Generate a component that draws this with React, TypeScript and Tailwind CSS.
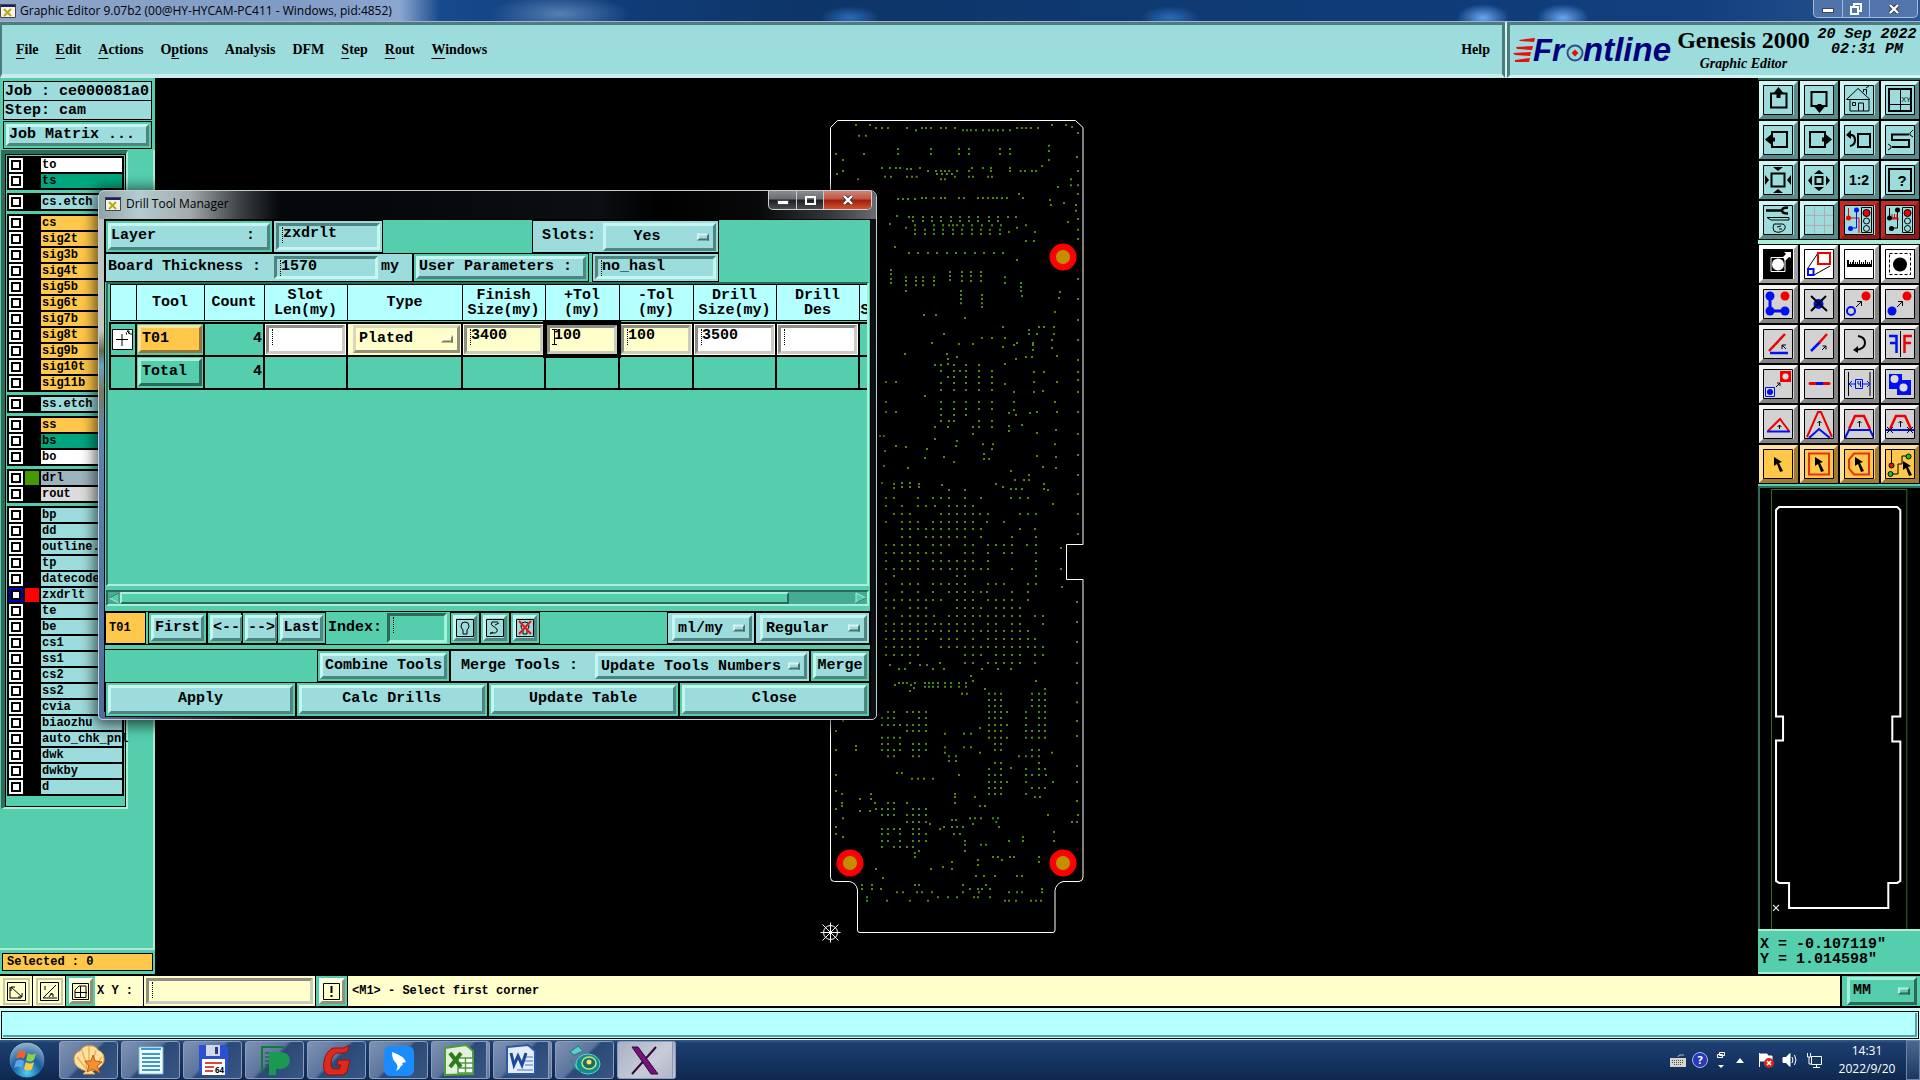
import type { ReactNode } from "react";

const mono = "font-['Liberation_Mono',monospace]";
const serif = "font-['Liberation_Serif',serif]";
const ui = "font-['Open_Sans','Noto_Sans',sans-serif]";

const raised = "border-[3px] border-t-[#c6f6f2] border-l-[#c6f6f2] border-r-[#4e8482] border-b-[#4e8482] bg-[#9cdcdc]";
const raisedGreen = "border-[3px] border-t-[#a9efd8] border-l-[#a9efd8] border-r-[#2b6a59] border-b-[#2b6a59]";
const raisedYellow = "border-[3px] border-t-[#d8d8b8] border-l-[#d8d8b8] border-r-[#90907c] border-b-[#90907c] bg-[#ffffcc]";
const sunken = "border-[3px] border-t-[#4e8482] border-l-[#4e8482] border-r-[#c6f6f2] border-b-[#c6f6f2]";
const sunkenGrey = "border-[3px] border-t-[#8e8e86] border-l-[#8e8e86] border-r-[#cbcbc0] border-b-[#cbcbc0]";

const MENUS: [string, string, string][] = [
  ["", "F", "ile"],
  ["", "E", "dit"],
  ["", "A", "ctions"],
  ["O", "p", "tions"],
  ["Analysis", "", ""],
  ["DFM", "", ""],
  ["", "S", "tep"],
  ["", "R", "out"],
  ["", "W", "indows"],
];

const CYAN = "bg-[#9cdcdc]";
const ORANGE = "bg-[#ffc84a]";

type Layer = { name: string; bg: string; swatch?: string; active?: boolean };

const LAYERS: Layer[][] = [
  [
    { name: "to", bg: "bg-white" },
    { name: "ts", bg: "bg-[#00a77e]" },
  ],
  [{ name: "cs.etch", bg: CYAN }],
  ["cs", "sig2t", "sig3b", "sig4t", "sig5b", "sig6t", "sig7b", "sig8t", "sig9b", "sig10t", "sig11b"].map((name) => ({ name, bg: ORANGE })),
  [{ name: "ss.etch", bg: CYAN }],
  [
    { name: "ss", bg: ORANGE },
    { name: "bs", bg: "bg-[#00a77e]" },
    { name: "bo", bg: "bg-white" },
  ],
  [
    { name: "drl", bg: "bg-[#9cb4be]", swatch: "bg-[#449800]" },
    { name: "rout", bg: "bg-[#dcdcdc]" },
  ],
  [
    ...["bp", "dd", "outline.", "tp", "datecode"].map((name) => ({ name, bg: CYAN })),
    { name: "zxdrlt", bg: CYAN, swatch: "bg-[#ff0000]", active: true },
    ...["te", "be", "cs1", "ss1", "cs2", "ss2", "cvia", "biaozhu", "auto_chk_pnl", "dwk", "dwkby", "d"].map((name) => ({ name, bg: CYAN })),
  ],
];

// drill hits, one row per entry: y followed by every x, three units per pixel
const HITS_TOP: number[][] = [
  [45, 108, 150, 696, 738], [51, 756], [54, 168, 186, 204, 261, 306, 318, 333, 363, 378, 405, 591, 606, 618, 633, 654],
  [61, 288, 429, 441, 453, 468, 489, 507, 519, 534, 549, 570], [69, 774], [77, 117, 138], [107, 687],
  [117, 234, 333, 417, 447, 540, 570], [123, 687], [132, 48, 132, 234, 333, 417, 447, 540, 570], [141, 771], [150, 69, 687],
  [168, 666], [174, 186, 210, 228, 240, 300, 456, 489, 513, 570], [177, 261, 273],
  [183, 69, 324, 348, 363, 375, 387, 411, 447, 513, 570, 602, 615, 636, 648, 774], [192, 51, 351, 366, 381, 396],
  [200, 195, 213, 261, 276, 290, 405, 447, 459, 504, 516], [208, 114, 363, 375, 753], [226, 753, 774], [231, 714], [252, 597, 774],
  [264, 306, 318, 342, 363, 375, 417, 432, 474, 489, 504, 519, 531, 546, 561, 609], [267, 234, 249, 264, 285], [270, 690], [279, 732],
  [285, 693, 768], [302, 768], [318, 231], [321, 267, 279, 309, 336, 363, 393, 420, 447, 474, 507, 534, 564, 588], [327, 774],
  [333, 279, 309, 336, 363, 393, 420, 447, 474, 507, 534], [336, 744], [342, 210],
  [346, 285, 342, 369, 387, 399, 411, 429, 456, 486, 516, 543, 618], [353, 258, 591],
  [359, 285, 315, 342, 369, 399, 426, 456, 483, 510, 540, 774], [366, 567, 645],
  [372, 285, 315, 342, 369, 399, 426, 456, 483, 510, 540], [387, 774], [393, 618, 642], [411, 225],
  [429, 267, 294, 324, 351, 381, 408, 435, 465, 492, 522, 549], [450, 591], [480, 213], [486, 390, 426, 453, 483], [492, 213],
  [498, 390, 426, 453, 483], [502, 258, 288, 309, 342, 555], [507, 213, 774], [510, 390], [513, 258, 288, 309, 342, 426, 453, 483],
  [519, 213, 555, 603], [526, 258, 288, 309, 342], [531, 603], [543, 258, 423, 603], [546, 720], [555, 423, 486], [558, 606],
  [564, 717], [567, 423, 486, 774], [580, 423, 486], [591, 486], [606, 705], [615, 312, 348], [624, 435], [630, 774],
  [651, 549, 657, 672, 702], [660, 627], [672, 372, 627, 651, 702], [684, 486, 516, 555], [690, 696, 774], [699, 336, 591, 639],
  [702, 417, 459], [705, 582, 639], [711, 549], [714, 696], [720, 639], [732, 255, 381], [738, 711], [741, 411, 618, 636],
  [747, 384, 588], [750, 774], [762, 384, 555], [765, 345, 363, 402, 438, 477], [783, 363, 402, 420, 438, 477, 516],
  [786, 642, 672, 774], [801, 384, 402, 438, 477, 516], [810, 774], [816, 198, 228, 642, 711], [819, 363, 402, 438, 477, 516],
  [822, 555], [840, 363, 402, 438, 477, 516], [843, 669], [846, 582, 642, 774], [858, 315],
  [876, 198, 363, 402, 438, 477, 516, 582, 705], [897, 363, 402, 438, 477, 516], [900, 582], [906, 198, 228, 651, 711, 774],
  [909, 567, 630], [915, 363, 402, 438, 588], [933, 363, 387, 402, 477, 516], [945, 606], [948, 567], [951, 345, 384, 459, 477, 516],
  [960, 708], [963, 567], [969, 651], [972, 459, 774], [978, 180, 192], [987, 345], [993, 411], [1003, 489, 519, 705],
  [1008, 228, 408], [1011, 258], [1017, 321, 516], [1023, 195], [1032, 492], [1035, 774], [1038, 651], [1041, 372, 708], [1044, 315],
  [1047, 492, 507], [1056, 402], [1068, 192], [1071, 669], [1074, 264, 708], [1083, 573], [1095, 627, 774], [1110, 585, 612, 627],
  [1119, 186, 246, 270], [1122, 222, 297, 528, 672], [1125, 366], [1131, 246, 270, 297, 549], [1134, 222], [1137, 573, 588, 606, 672],
  [1140, 387, 435, 684], [1152, 774], [1164, 198, 222, 294, 339, 363, 387, 435, 483, 573, 600, 624], [1182, 699],
  [1188, 198, 246, 294, 318, 345, 387, 411, 435, 459],
];

const HITS_BOTTOM: number[][] = [
  [12, 222, 246, 270, 363, 387, 411, 435, 459, 480, 504, 600, 624, 648, 774], [36, 198, 246, 270, 294, 339, 363, 387, 411, 435, 459, 501, 552],
  [57, 246, 270, 294, 318, 339, 363, 387, 411, 435, 459, 483, 600, 645], [72, 774],
  [81, 246, 270, 318, 339, 363, 387, 411, 435, 483, 576, 648],
  [105, 198, 222, 246, 270, 294, 339, 363, 387, 435, 459, 504, 528, 552, 576, 621, 648], [114, 723],
  [129, 198, 222, 246, 270, 294, 318, 339, 363, 435, 459, 504, 552, 576, 648],
  [153, 198, 246, 270, 294, 339, 363, 387, 411, 435, 459, 504, 648],
  [177, 198, 222, 246, 270, 294, 339, 363, 390, 411, 435, 459, 483, 504, 576, 648, 723], [198, 222, 411, 435, 648],
  [222, 198, 246, 270, 294, 339, 363, 387, 411, 435, 504, 528, 552, 624, 648], [231, 726],
  [246, 198, 246, 294, 339, 387, 411, 435, 459, 483, 501, 576, 624],
  [270, 198, 222, 246, 270, 294, 318, 339, 363, 411, 435, 459, 504, 528, 552, 576, 624], [276, 771],
  [294, 198, 222, 270, 294, 318, 411, 435, 459, 483, 528, 552, 576, 600],
  [318, 198, 246, 270, 294, 318, 342, 387, 411, 435, 459, 480, 504, 528, 552, 576, 600, 645, 669], [336, 771],
  [342, 198, 222, 246, 270, 294, 318, 345, 363, 387, 411, 435, 459, 504, 528, 576, 600, 669],
  [363, 198, 222, 246, 270, 294, 318, 339, 363, 387, 411, 435, 459, 483, 504, 528, 552, 576, 600, 624],
  [387, 198, 222, 246, 270, 294, 318, 363, 387, 411, 459, 504, 528, 552, 576, 600, 624, 645], [396, 771],
  [411, 198, 222, 246, 270, 294, 363, 387, 411, 435, 459, 483, 504, 528, 552, 576, 600, 624, 645, 669],
  [435, 198, 222, 246, 270, 294, 435, 459, 483, 528, 552, 576, 600, 645, 669],
  [459, 270, 360, 435, 459, 504, 528, 552, 576, 600, 645, 771], [465, 210, 300, 321], [477, 237, 255, 339, 372, 486, 534, 573],
  [498, 453], [513, 459, 648], [519, 237, 249, 261, 285, 315, 327, 339, 354, 375, 393, 417, 438, 771],
  [525, 225, 273], [530, 315, 327, 339, 354, 375, 393, 417, 438], [534, 282], [537, 495, 675], [543, 270],
  [551, 426, 441, 507, 525, 543, 636, 657, 675], [570, 507, 525, 543, 636, 657, 675], [577, 771], [588, 507, 525, 543, 636, 657, 675],
  [606, 204, 222, 261, 279, 297, 318, 507, 525, 543, 561, 618, 657, 675], [624, 186, 204, 222, 297, 318, 507, 525, 543, 618, 657, 675],
  [633, 69, 771], [645, 186, 204, 222, 240, 261, 279, 297, 318, 507, 525, 543, 561, 618, 657, 675], [654, 480],
  [663, 48, 261, 279, 297, 318, 507, 525, 543, 618, 636, 657, 675], [671, 375, 432, 453], [678, 771],
  [683, 186, 204, 222, 240, 507, 525, 543, 561, 618, 636, 657, 675], [702, 186, 204, 240, 279, 297, 318, 525, 543], [708, 108],
  [712, 375, 432, 453], [720, 48, 108, 186, 204, 222, 240, 279, 297, 318, 525, 543, 636, 657], [728, 375, 480, 696],
  [739, 204, 222, 279, 297, 387, 408, 597, 618, 636, 657], [753, 387, 408], [759, 525, 543, 657], [768, 771], [774, 573],
  [777, 507, 543, 618, 657, 675], [789, 231, 246], [795, 48, 417, 507, 525, 543, 618, 636, 657, 678], [806, 276, 294, 312, 339],
  [816, 507, 525, 543, 561, 618, 699, 771], [834, 507, 525, 543, 636, 657, 675], [843, 48], [852, 66, 153, 405, 507, 525, 543, 618],
  [861, 405, 465, 645, 660], [867, 120, 153], [873, 771], [879, 66, 165, 204, 222, 261, 405], [888, 66, 480, 495],
  [897, 48, 168, 186, 204, 222, 279, 297, 318], [903, 120, 150], [915, 186, 204, 222, 261, 279, 297, 318, 684, 774],
  [925, 69, 450, 465, 483, 519, 534], [930, 396, 408], [936, 261, 279, 297, 318, 529, 756, 771], [942, 330, 459],
  [951, 48, 372, 396, 411, 429, 537], [957, 186, 204, 222, 240, 279, 297, 360], [966, 702], [972, 48, 186, 204, 240, 279, 297, 318, 402, 420],
  [981, 69, 609], [993, 186, 204, 240, 279, 297, 318, 435, 567, 609, 702], [1004, 435, 483, 498], [1011, 186, 222, 240, 261, 279],
  [1023, 297, 435], [1029, 285], [1041, 285, 519, 534, 570, 582, 657], [1050, 474, 546], [1056, 396, 657], [1065, 474], [1071, 369],
  [1077, 168, 333, 396], [1098, 468, 492, 525, 591, 606], [1104, 189], [1125, 126, 156, 285, 297, 429, 498],
  [1137, 126, 156, 183, 450, 474, 486, 510, 666], [1147, 231, 249, 291, 306, 336, 429, 477, 567, 591, 606, 666],
  [1162, 141, 354, 384, 411, 462, 474, 510], [1172, 141, 201, 270, 324, 555, 567, 588, 633, 648, 663],
];

const hitsPath = (rows: number[][]) => rows.map(([y, ...xs]) => xs.map((x) => `M${x - 3} ${y}h6`).join("")).join("");

function Caret({ solid }: { solid?: boolean }) {
  return (
    <span
      className={
        solid
          ? "pointer-events-none absolute top-px left-[2px] h-4 w-[5px] border-y border-black bg-[linear-gradient(black,black)] bg-[length:1px_100%] bg-center bg-no-repeat"
          : "pointer-events-none absolute top-px left-[3px] h-4 w-px border-l border-dotted border-black"
      }
    />
  );
}

function Entry({ label, value = "", className, solid }: { label: string; value?: string; className: string; solid?: boolean }) {
  return (
    <div className={`relative flex items-start ${className}`}>
      <Caret solid={solid} />
      <input aria-label={label} defaultValue={value} className="h-[17px] w-full min-w-0 bg-transparent pl-1 font-bold outline-none" />
    </div>
  );
}

function Option({ label, value, className, box = raised, align = "text-left" }: { label: string; value: string; className: string; box?: string; align?: string }) {
  return (
    <div className={`relative flex ${box} ${className}`}>
      <select aria-label={label} className={`w-full appearance-none bg-transparent px-[3px] font-bold outline-none ${align}`}>
        <option>{value}</option>
      </select>
      <span className="pointer-events-none absolute top-1/2 right-1 h-[7px] w-3 -translate-y-1/2 border-2 border-t-white/60 border-r-black/50 border-b-black/50 border-l-white/60" />
    </div>
  );
}

function Cell({ children, className = "", bg = "bg-[#55ceae]" }: { children?: ReactNode; className?: string; bg?: string }) {
  return <div className={`flex border border-black p-[2px] ${bg} ${className}`}>{children}</div>;
}

function PushButton({ children, align = "justify-center" }: { children: ReactNode; align?: string }) {
  return (
    <button type="button" className={`flex flex-1 items-center font-bold whitespace-pre ${align} ${raised}`}>
      {children}
    </button>
  );
}

function AppGlyph() {
  return (
    <svg viewBox="0 0 16 14" className="h-[14px] w-4 shrink-0">
      <path d="M0 0h16v14H0z" fill="#f4f4e8" />
      <path d="M0 0h16v3H0z" fill="#1c1c78" />
      <path d="M.5.5h15v13H.5z" fill="none" stroke="#444" />
      <path d="M4 5l7 7M11 5l-7 7" stroke="#b8a818" strokeWidth="2" />
    </svg>
  );
}

function CloseGlyph() {
  return (
    <svg viewBox="0 0 12 10" className="h-[10px] w-3">
      <path d="M2 1l8 8M10 1L2 9" stroke="#334" strokeWidth="4" />
      <path d="M2 1l8 8M10 1L2 9" stroke="#fff" strokeWidth="2.4" />
    </svg>
  );
}

function TitleBar() {
  return (
    <div
      className={`flex h-[22px] items-start border-b border-[#9fb4cc] bg-[radial-gradient(ellipse_26px_14px_at_1483px_18px,#6aa6f4,transparent),radial-gradient(ellipse_26px_14px_at_1563px_18px,#6aa6f4,transparent),radial-gradient(ellipse_30px_12px_at_850px_18px,#2c6cb8,transparent),radial-gradient(ellipse_30px_12px_at_1170px_18px,#2c6cb8,transparent),radial-gradient(ellipse_70px_20px_at_560px_14px,#5580b4,transparent),linear-gradient(90deg,#8fa6c8_0,#7f9cc6_280px,#8ba6d0_400px,#174a8c_440px,#103c78_620px,#0d3568_800px,#0f3c78_1400px,#12407e_1700px,#2a5894_100%)] ${ui}`}
    >
      <div className="flex flex-1 items-center gap-1 pt-[3px]">
        <AppGlyph />
        <span className="text-[12px] leading-4 text-black">Graphic Editor 9.07b2 (00@HY-HYCAM-PC411 - Windows, pid:4852)</span>
      </div>
      <div className="mr-[2px] flex h-[18px] w-[105px] divide-x divide-[#a8bcd8] rounded-b-[5px] border border-t-0 border-[#a8bcd8] bg-[#6485b8]/70">
        <button type="button" aria-label="Minimize" className="flex w-[29px] items-center justify-center">
          <span className="mt-1 h-[5px] w-3 border border-[#445] bg-white" />
        </button>
        <button type="button" aria-label="Restore" className="flex w-[27px] items-center justify-center">
          <svg viewBox="0 0 14 12" className="h-3 w-[14px]" fill="none" stroke="#fff" strokeWidth="2">
            <path d="M5 3V1h7v7h-2M2 4h7v7H2z" />
          </svg>
        </button>
        <button type="button" aria-label="Close window" className="flex flex-1 items-center justify-center">
          <CloseGlyph />
        </button>
      </div>
    </div>
  );
}

function Logo() {
  return (
    <svg viewBox="0 0 160 38" className="h-[38px] w-[160px] shrink-0 overflow-visible">
      <path d="M6 8l15-2h1l-1 4-14-1zM3 15l17-1-1 4-15-1zM0 21l18-1-1 4-15-1zM2 28l15-2-1 4H2z" fill="#e8100c" />
      <g className="font-['Liberation_Sans',sans-serif] font-bold italic" fill="#00007c">
        <text x="20" y="29" fontSize="31">
          Fr
        </text>
        <text x="70" y="29" fontSize="33">
          ntline
        </text>
      </g>
      <circle cx="62" cy="21" r="7.500" fill="none" stroke="#30508c" strokeWidth="2" />
      <path d="M62 17.500l3.500 3.500-3.500 3.500-3.500-3.500z" fill="#e8100c" />
    </svg>
  );
}

function Header() {
  return (
    <header className="flex h-14 bg-[#d4f4f2]">
      <nav className={`flex flex-1 items-center border-t-[3px] border-r-[3px] border-b-[4px] border-l-2 border-t-[#4e7c7c] border-r-[#4e7c7c] border-b-[#c8ecea] border-l-[#4e7c7c] bg-[#9cdcdc] pr-3 pl-[14px] text-[14px] font-bold ${serif}`}>
        <div className="flex flex-1 gap-[17px]">
          {MENUS.map(([before, key, after]) => (
            <button type="button" key={before + key + after}>
              {before}
              <span className="underline underline-offset-4">{key}</span>
              {after}
            </button>
          ))}
        </div>
        <button type="button">Help</button>
      </nav>
      <div className="ml-[2px] flex w-[413px] items-start border-t-[3px] border-b-[3px] border-l-[3px] border-t-[#4e7c7c] border-b-[#d4f4f2] border-l-[#4e7c7c] bg-[#9cdcdc] pt-[2px] pl-[3px]">
        <div className="pt-[5px]">
          <Logo />
        </div>
        <div className={`flex w-[141px] flex-col items-center font-bold whitespace-nowrap ${serif}`}>
          <span className="text-[24px] leading-[26px]">Genesis 2000</span>
          <span className="text-[14px] leading-[22px] italic">Graphic Editor</span>
        </div>
        <div className={`flex flex-1 flex-col items-center text-[15px] leading-[15px] font-bold italic ${mono}`}>
          <span>20 Sep 2022</span>
          <span>02:31 PM</span>
        </div>
      </div>
    </header>
  );
}

function LayerRow({ layer }: { layer: Layer }) {
  return (
    <li className="flex h-4 items-center gap-[2px] pl-px">
      <input
        type="checkbox"
        aria-label={layer.name}
        className={`size-[14px] shrink-0 appearance-none border-[3px] bg-white outline-2 -outline-offset-4 outline-black ${layer.active ? "border-[#0000b8]" : "border-white"}`}
      />
      <span className={`size-[14px] shrink-0 ${layer.swatch ?? "bg-black"}`} />
      <span className={`h-[14px] min-w-0 flex-1 pl-px text-[12px] leading-[14px] font-bold ${layer.bg}`}>{layer.name}</span>
    </li>
  );
}

function LayerPanel() {
  return (
    <aside className={`flex w-[155px] shrink-0 flex-col bg-[#55ceae] ${mono}`}>
      <div className="flex flex-col px-[3px] pt-[3px] text-[15px] font-bold">
        <div className="h-5 border border-black bg-[#9cdcdc] pl-px leading-[19px] whitespace-pre">Job : ce000081a0</div>
        <div className="h-[19px] border border-t-0 border-black bg-[#9cdcdc] pl-px leading-[19px]">Step: cam</div>
        <Cell className="mt-px h-7 w-full">
          <PushButton align="justify-start">Job Matrix ...</PushButton>
        </Cell>
      </div>
      <div className="mt-px flex flex-1 flex-col items-start border-r-2 border-b-2 border-[#a9efd8] pl-px">
        <div className="border-t-4 border-r-2 border-b-2 border-l-4 border-t-[#2e6b5b] border-r-[#a9efd8] border-b-[#a9efd8] border-l-[#2e6b5b]">
          <div className="border border-black p-[1px] pb-[10px]">
            <div className="flex flex-col gap-[3px]">
              {LAYERS.map((group) => (
                <ul key={group[0].name} className="w-[117px] bg-black p-px pr-[2px]">
                  {group.map((layer) => (
                    <LayerRow key={layer.name} layer={layer} />
                  ))}
                </ul>
              ))}
            </div>
          </div>
        </div>
      </div>
      <div className="px-[2px] py-[3px]">
        <div className="h-[18px] border border-black bg-[#ffc84a] pl-1 text-[12px] leading-4 font-bold">Selected : 0</div>
      </div>
    </aside>
  );
}

function BoardCanvas() {
  return (
    <section className="relative flex-1 overflow-hidden bg-black">
      <svg viewBox="155 78 1603 896" className="absolute inset-0 size-full" preserveAspectRatio="xMidYMid slice">
        <path
          d="M830.500 127.500l7-7h238l7.500 7V544.500h-16.500v35h16.500V877q0 4-4 4.500h-16q-7 2-8 9V930q0 2.500-2 2.500H860q-2.500 0-2.500-2.500v-40q-1-7-8-8.500h-15q-4 0-4-4z"
          fill="none"
          stroke="#fff"
        />
        <g stroke="#4d8a12" strokeWidth="6">
          <path transform="translate(820 110) scale(.33333)" d={hitsPath(HITS_TOP)} />
          <path transform="translate(820 510) scale(.33333)" d={hitsPath(HITS_BOTTOM)} />
        </g>
        {[
          [1063, 257],
          [850, 863],
          [1063, 863],
        ].map(([x, y]) => (
          <g key={`${x}-${y}`}>
            <circle cx={x} cy={y} r="13.500" fill="#f00" />
            <circle cx={x} cy={y} r="7" fill="#c09000" />
          </g>
        ))}
        <g fill="none" stroke="#fff" transform="translate(830.500 932.500)">
          <circle r="7" />
          <path d="M-10 0h20M0-10v20M-8-8l16 16M8-8L-8 8" />
        </g>
      </svg>
    </section>
  );
}

type Tool = { name: string; art: ReactNode };

const K = "#000";
const R = "#f00000";
const B = "#0010f0";

const VIEW_TOOLS: Tool[] = [
  {
    name: "Pan up",
    art: (
      <>
        <path d="M8 8.500h15.500v14H8z" fill="none" stroke={K} strokeWidth="2" />
        <path d="M15.500 2l-5 6h3v5h4V8h3z" />
      </>
    ),
  },
  {
    name: "Pan down",
    art: (
      <>
        <path d="M7.500 7h15v14h-15z" fill="none" stroke={K} strokeWidth="2" />
        <path d="M15.500 28l-5-6h3v-3h4v3h3z" />
      </>
    ),
  },
  {
    name: "Home",
    art: (
      <path d="M2.500 14.500L14 3.500l12 11H2.500M6 14.500V26h19V14.500M14.500 26v-8h5v8M8.500 17.500h3v3h-3zM19.500 7V4.500h3v5M22 3l3-2" fill="none" stroke={K} />
    ),
  },
  {
    name: "Set view by coordinates",
    art: (
      <>
        <path d="M4 4h22v22H4z" fill="none" stroke={K} strokeWidth="2" />
        <path d="M15.500 4v22M4 19.500h22" fill="none" stroke={K} />
        <text x="16.500" y="17" fontSize="7" className="font-['Liberation_Sans',sans-serif]">
          XY
        </text>
      </>
    ),
  },
  {
    name: "Pan left",
    art: (
      <>
        <path d="M9 7h15v15H9z" fill="none" stroke={K} strokeWidth="2" />
        <path d="M2 14.500l6-5v3h4v4H8v3z" />
      </>
    ),
  },
  {
    name: "Pan right",
    art: (
      <>
        <path d="M6 7h15v15H6z" fill="none" stroke={K} strokeWidth="2" />
        <path d="M28 14.500l-6-5v3h-4v4h4v3z" />
      </>
    ),
  },
  {
    name: "Previous view",
    art: (
      <>
        <path d="M14 9h12v13H14z" fill="none" stroke={K} strokeWidth="2" />
        <path d="M5 10h3q3 1 3 5 0 5-5 6" fill="none" stroke={K} strokeWidth="2" />
        <path d="M2 10l5-5v9z" />
      </>
    ),
  },
  {
    name: "Serpentine",
    art: (
      <>
        <path d="M24 9.500H7v5.500h17v7H7" fill="none" stroke={K} strokeWidth="2" />
        <path d="M28 5l-3 3v2l3 2M3 19l3 2v2l-3 2" fill="none" stroke={K} />
      </>
    ),
  },
  {
    name: "Zoom out",
    art: (
      <>
        <path d="M8.500 8.500h13v13h-13z" fill="none" stroke={K} strokeWidth="2" />
        <path d="M10 2h10l-5 4zM10 28h10l-5-4zM2 10v10l4-5zM28 10v10l-4-5z" />
      </>
    ),
  },
  {
    name: "Zoom in",
    art: (
      <>
        <path d="M11.500 12h7v7h-7z" fill="none" stroke={K} strokeWidth="2" />
        <path d="M10 9h10l-5-4zM10 22h10l-5 4zM8 10.500v10l-4-5zM22 10.500v10l4-5z" />
      </>
    ),
  },
  {
    name: "Scale 1:2",
    art: (
      <text x="15" y="20" textAnchor="middle" fontSize="14" fontWeight="bold" className="font-['Liberation_Sans',sans-serif]">
        1:2
      </text>
    ),
  },
  {
    name: "Query",
    art: (
      <>
        <path d="M4 4h22v22H4z" fill="none" stroke={K} strokeWidth="2" />
        <text x="17" y="21" textAnchor="middle" fontSize="15" fontWeight="bold" className="font-['Liberation_Sans',sans-serif]">
          ?
        </text>
      </>
    ),
  },
  {
    name: "Settings",
    art: (
      <>
        <path d="M3 5.500h16M25 2.500q-6 0-6 3t6 3" fill="none" stroke={K} strokeWidth="2.500" />
        <path d="M4 12.500h22v2.500H8zM11 19h9q4 2 1 6-5 4-10 1-2-3 0-7M14 22l4-1M16 24h3" fill="none" stroke={K} />
      </>
    ),
  },
  { name: "Grid", art: <path d="M10.500 1v28M20.500 1v28M1 10.500h28M1 20.500h28" fill="none" stroke="#b8a8b4" /> },
  {
    name: "Online DRC",
    art: (
      <>
        <path d="M4.500 3v10H15v15" fill="none" stroke={R} />
        <path d="M12.500 6v17H6" fill="none" stroke={B} />
        <circle cx="4.500" cy="13" r="2.500" fill={R} />
        <circle cx="12.500" cy="5" r="2.500" fill={B} />
        <circle cx="6.500" cy="23.500" r="2.500" fill={B} />
        <path d="M17.500 2.500h10v25h-10z" fill="none" stroke={K} />
        <circle cx="22.500" cy="8" r="3.500" fill={R} stroke={K} />
        <circle cx="22.500" cy="16" r="3" fill="none" stroke={K} />
        <circle cx="22.500" cy="23.500" r="3" fill="none" stroke={K} />
      </>
    ),
  },
  {
    name: "Net DRC",
    art: (
      <>
        <path d="M4.500 3v10H12M12.500 6v17H6" fill="none" stroke={K} />
        <path d="M7 9v5h7M9.500 9v5M12 9v5" fill="none" stroke={R} />
        <circle cx="4.500" cy="13" r="2.500" />
        <circle cx="12.500" cy="5" r="2.500" />
        <circle cx="6.500" cy="23.500" r="2.500" />
        <path d="M17.500 2.500h10v25h-10z" fill="none" stroke={K} />
        <circle cx="22.500" cy="8" r="3.500" fill={R} stroke={K} />
        <circle cx="22.500" cy="16" r="3" fill="none" stroke={K} />
        <circle cx="22.500" cy="23.500" r="3" fill="none" stroke={K} />
      </>
    ),
  },
];

const cursor = "M11 8l8 5-3 1 4 8-3 1-3-8-3 2z";

const EDIT_TOOLS: Tool[] = [
  {
    name: "Negative",
    art: (
      <>
        <path d="M0 0h30v30H0z" />
        <path d="M8 8.500h14v14H8z" fill="none" stroke="#fff" />
        <circle cx="15" cy="15.500" r="6" fill="#fff" />
        <path d="M20 8l3-3-2-2h7v6l-2-1-4 4z" fill="#fff" />
      </>
    ),
  },
  {
    name: "Resize",
    art: (
      <>
        <path d="M4 19L14 4M10 26l16-9" stroke={K} />
        <path d="M14 4h12v11H14z" fill="none" stroke={R} strokeWidth="2" />
        <path d="M4 20h5.500v6H4z" fill="none" stroke={B} strokeWidth="2" />
      </>
    ),
  },
  {
    name: "Measure",
    art: <path d="M3 11v7h25v-7h-1v4h-1v-2h-1v2h-1v-2h-1v2h-1v-4h-1v4h-1v-2h-1v2h-1v-2h-1v2h-1v-4h-1v4h-1v-2h-1v2h-1v-2h-1v2h-1v-4h-1v4H9v-2H8v2H7v-2H6v2H5v-4z" />,
  },
  {
    name: "Select pad",
    art: (
      <>
        <path d="M4.500 4.500h21v21h-21z" fill="none" stroke={K} strokeDasharray="3 2" />
        <circle cx="15" cy="15.500" r="7" />
      </>
    ),
  },
  {
    name: "Add line",
    art: (
      <>
        <path d="M7 7v15h15" fill="none" stroke={B} strokeWidth="3" />
        <circle cx="7" cy="7" r="4.500" fill={B} />
        <circle cx="7" cy="22" r="4.500" fill={B} />
        <circle cx="22" cy="22" r="4.500" fill={B} />
        <circle cx="22" cy="7" r="4.500" fill={R} />
      </>
    ),
  },
  {
    name: "Delete",
    art: (
      <>
        <circle cx="14.500" cy="15" r="5" fill={B} />
        <path d="M7 7l16 15M22 7L7 22" stroke={K} strokeWidth="2" />
      </>
    ),
  },
  {
    name: "Copy",
    art: (
      <>
        <circle cx="7" cy="22" r="4" fill="none" stroke={B} strokeWidth="2" />
        <circle cx="22" cy="7" r="4.500" fill={R} />
        <path d="M12 18l5-5M13 12.500h4.500V17" fill="none" stroke={K} />
      </>
    ),
  },
  {
    name: "Move",
    art: (
      <>
        <circle cx="7" cy="22" r="4.500" fill={B} />
        <circle cx="22" cy="7" r="4.500" fill={R} />
        <path d="M12 18l5-5M13 12.500h4.500V17" fill="none" stroke={K} />
      </>
    ),
  },
  {
    name: "Rotate line",
    art: (
      <>
        <path d="M6 22L22 5" stroke={R} strokeWidth="2.500" />
        <path d="M7 24h18" stroke={B} strokeWidth="2.500" />
        <path d="M23 20l-4-4v4M19 16h4" fill="none" stroke={K} />
      </>
    ),
  },
  {
    name: "Stretch line",
    art: (
      <>
        <path d="M7 22l9-9" stroke={B} strokeWidth="2.500" />
        <path d="M15 14l8-9" stroke={R} strokeWidth="2.500" />
        <path d="M18 21l4-4M18.500 17H22v3.500" fill="none" stroke={K} />
      </>
    ),
  },
  {
    name: "Rotate",
    art: (
      <>
        <path d="M14 7q7 1 7 7 0 6-9 7" fill="none" stroke={K} strokeWidth="2" />
        <path d="M9 21l5-4v7z" />
      </>
    ),
  },
  {
    name: "Mirror",
    art: (
      <>
        <path d="M15.500 2v26" stroke={K} />
        <path d="M4 7h7.500v17M11 14H5" fill="none" stroke={B} strokeWidth="2.500" />
        <path d="M27 7h-7.500v17M20 14h6" fill="none" stroke={R} strokeWidth="2.500" />
      </>
    ),
  },
  {
    name: "Move to layer",
    art: (
      <>
        <path d="M2.500 18.500h9v9h-9z" fill="none" stroke={B} />
        <circle cx="7" cy="23" r="3" fill={B} />
        <path d="M17 2h11v11H17z" fill={R} />
        <circle cx="22.500" cy="7.500" r="3" fill="#dcdcdc" />
        <path d="M13 18l4-4M14 14h3v3" fill="none" stroke={K} />
      </>
    ),
  },
  {
    name: "Break line",
    art: (
      <>
        <path d="M6 14.500h19" stroke={R} strokeWidth="3" strokeLinecap="round" />
        <path d="M12 14.500h7" stroke={B} strokeWidth="3" />
      </>
    ),
  },
  {
    name: "Spacing",
    art: (
      <>
        <path d="M4.500 3v24M26 3v24" stroke={K} />
        <path d="M5 15h6M19 15h7M8 12l-3 3 3 3M23 12l3 3-3 3M11.500 10.500h7v9h-7zM14 12v3h3M16.500 12v6" fill="none" stroke={B} />
      </>
    ),
  },
  {
    name: "Merge shapes",
    art: (
      <>
        <path d="M4 5h13v6h9v15H12v-6H4z" fill={B} />
        <circle cx="9.500" cy="10" r="4" fill="#dcdcdc" />
        <circle cx="18.500" cy="18.500" r="4" fill="#dcdcdc" />
      </>
    ),
  },
  {
    name: "Small triangle",
    art: (
      <>
        <path d="M5 22l12-12 9 12" fill="none" stroke={R} strokeWidth="2" />
        <path d="M4 22.500h23" stroke={B} strokeWidth="2" />
        <path d="M16.500 20v-4M14.500 18l2-2 2 2" fill="none" stroke={K} />
      </>
    ),
  },
  {
    name: "Sharp corner",
    art: (
      <>
        <path d="M3 28L14 3h3l11 25" fill="none" stroke={R} strokeWidth="2" />
        <path d="M5 29l10-9 11 9" fill="none" stroke={B} strokeWidth="2" />
        <path d="M15.500 17v-5M13.500 14l2-2 2 2" fill="none" stroke={K} />
      </>
    ),
  },
  {
    name: "Trapezoid",
    art: (
      <>
        <path d="M5 20l6-13h9l6 13" fill="none" stroke={R} strokeWidth="2.500" />
        <path d="M1 29l4-8h21l4 8" fill="none" stroke={B} strokeWidth="2" />
        <path d="M15.500 18v-6M13.500 14l2-2 2 2" fill="none" stroke={K} />
      </>
    ),
  },
  {
    name: "Trapezoid cut",
    art: (
      <>
        <path d="M5 20l6-13h9l6 13" fill="none" stroke={R} strokeWidth="2.500" />
        <path d="M0 21h30" stroke={B} strokeWidth="2" />
        <path d="M15.500 18v-6M13.500 14l2-2 2 2M2 18l6 6M8 18l-6 6M22 18l6 6M28 18l-6 6" fill="none" stroke={K} />
      </>
    ),
  },
  { name: "Select", art: <path d={cursor} /> },
  {
    name: "Select frame",
    art: (
      <>
        <path d="M5 4.500h20v21H5z" fill="none" stroke="#e83018" strokeWidth="2" />
        <path d={cursor} />
      </>
    ),
  },
  {
    name: "Select polygon",
    art: (
      <>
        <path d="M10 4.500h15v21H10l-5-6v-9z" fill="none" stroke="#e83018" strokeWidth="2" />
        <path d={cursor} />
      </>
    ),
  },
  {
    name: "Select net",
    art: (
      <>
        <path d="M6.500 0v16M6 25h7V15h4V7h6" fill="none" stroke={K} />
        <circle cx="6.500" cy="16.500" r="2.500" fill="#d81810" stroke={K} />
        <circle cx="5.500" cy="25" r="2.500" fill="#18c818" stroke={K} />
        <circle cx="23.500" cy="7.500" r="2.500" fill="#18c818" stroke={K} />
        <path d={cursor} transform="translate(7 4)" />
      </>
    ),
  },
];

const viewShade = (i: number) =>
  i >= 14
    ? "border-[4px] border-t-[#c82828] border-l-[#c82828] border-r-[#981818] border-b-[#981818] bg-[#9cdcdc]"
    : "border-[4px] border-t-[#cdf6f4] border-l-[#cdf6f4] border-r-[#568c8c] border-b-[#568c8c] bg-[#9cdcdc]";

const editShade = (i: number) => {
  if (i < 4) return "border-[4px] border-t-white border-l-white border-r-[#a0a0a0] border-b-[#a0a0a0] bg-white";
  if (i >= 20) return "border-[4px] border-t-[#ffe2a0] border-l-[#ffe2a0] border-r-[#a07c30] border-b-[#a07c30] bg-[#ffc84a]";
  return "border-[4px] border-t-[#f4f4f4] border-l-[#f4f4f4] border-r-[#848484] border-b-[#848484] bg-[#d2d2d2]";
};

function ToolGrid({ tools, shade }: { tools: Tool[]; shade: (i: number) => string }) {
  return (
    <div className="grid grid-cols-4 gap-[2px] bg-black p-px">
      {tools.map((tool, i) => (
        <button type="button" key={tool.name} aria-label={tool.name} className={`flex h-[38px] items-center justify-center ${shade(i)}`}>
          <svg viewBox="0 0 30 30" className="size-[30px] shrink-0">
            {tool.art}
            <path d="M.5.5h29v29H.5z" fill="none" stroke={K} />
          </svg>
        </button>
      ))}
    </div>
  );
}

function ToolPanel() {
  return (
    <aside className={`flex w-[162px] shrink-0 flex-col border-t-2 border-[#2e6b5b] bg-[#55ceae] ${mono}`}>
      <ToolGrid tools={VIEW_TOOLS} shade={viewShade} />
      <div className="h-1 bg-[#a9efd8]" />
      <ToolGrid tools={EDIT_TOOLS} shade={editShade} />
      <div className="mt-[2px] flex flex-1 border-t-2 border-l-2 border-[#2e6b5b] bg-black">
        <svg viewBox="1760 489 160 440" className="h-full w-full" fill="none" preserveAspectRatio="xMinYMin slice">
          <path d="M1771.500 929V490.500h135V929" stroke="#3c6c10" />
          <path d="M1776 511l3-3h118l3 3v206h-8v25h8v139l-3 2h-9v25h-99v-25h-10l-3-2V741h7v-24h-7z" stroke="#fff" strokeWidth="2" />
          <path d="M1773 905l6 6M1779 905l-6 6" stroke="#fff" />
        </svg>
      </div>
      <div className="flex h-[45px] flex-col justify-center border-y-2 border-[#a9efd8] pt-px pl-[2px] text-[15px] leading-[15px] font-bold whitespace-pre">
        <span>X = -0.107119"</span>
        <span>Y = 1.014598"</span>
      </div>
    </aside>
  );
}

const COLUMNS: { lines: string[]; width: string }[] = [
  { lines: [""], width: "w-[26px]" },
  { lines: ["Tool"], width: "w-[68px]" },
  { lines: ["Count"], width: "w-[60px]" },
  { lines: ["Slot", "Len(my)"], width: "w-[83px]" },
  { lines: ["Type"], width: "w-[115px]" },
  { lines: ["Finish", "Size(my)"], width: "w-[83px]" },
  { lines: ["+Tol", "(my)"], width: "w-[74px]" },
  { lines: ["-Tol", "(my)"], width: "w-[74px]" },
  { lines: ["Drill", "Size(my)"], width: "w-[83px]" },
  { lines: ["Drill", "Des"], width: "w-[83px]" },
  { lines: ["\u00a0", "S"], width: "w-[12px]" },
];

const entryCell = `h-[29px] ${sunkenGrey}`;

function ToolTable() {
  return (
    <table className="w-[761px] table-fixed border-collapse">
      <colgroup>
        {COLUMNS.map((c, i) => (
          <col key={i} className={c.width} />
        ))}
      </colgroup>
      <thead>
        <tr className="h-9">
          {COLUMNS.map((c, i) => (
            <th key={i} className="border border-black bg-[#b4ffff] p-0 leading-[15px] whitespace-nowrap">
              {c.lines.map((line) => (
                <div key={line}>{line}</div>
              ))}
            </th>
          ))}
        </tr>
        <tr aria-hidden="true">
          <td colSpan={11} className="h-[2px] p-0" />
        </tr>
      </thead>
      <tbody>
        <tr className="h-[33px] *:border-2 *:border-black *:p-px">
          <td>
            <button type="button" aria-label="Expand T01" className="flex">
              <svg viewBox="0 0 21 21" className="size-[21px]">
                <path d="M.5.5h20v20H.5z" fill="#fff" stroke="#000" />
                <path d="M4 10.500h12M10 5v12M14.500 3.500v2M17 5V2h-2l3 3h2" fill="none" stroke="#000" />
              </svg>
            </button>
          </td>
          <td>
            <button type="button" className="h-7 w-full border-[3px] border-t-[#ffe2a0] border-r-[#94763a] border-b-[#94763a] border-l-[#ffe2a0] bg-[#ffc84a] pl-px text-left font-bold">
              T01
            </button>
          </td>
          <td className="text-right">4</td>
          <td className="bg-white">
            <Entry label="Slot length" className={entryCell} />
          </td>
          <td className="bg-[#ffffcc]">
            <Option label="Type" value="Plated" box={raisedYellow} className="ml-[4px] h-7" />
          </td>
          <td className="bg-[#ffffcc]">
            <Entry label="Finish size" value="3400" className={entryCell} />
          </td>
          <td className="bg-[#ffffcc] outline-4 -outline-offset-2 outline-black">
            <Entry label="Plus tolerance" value="100" className={entryCell} solid />
          </td>
          <td className="bg-[#ffffcc]">
            <Entry label="Minus tolerance" value="100" className={entryCell} />
          </td>
          <td className="bg-white">
            <Entry label="Drill size" value="3500" className={entryCell} />
          </td>
          <td className="bg-white">
            <Entry label="Drill designator" className={entryCell} />
          </td>
          <td />
        </tr>
        <tr className="h-[33px] *:border-2 *:border-black *:p-px">
          <td />
          <td>
            <button type="button" className={`h-7 w-full pl-px text-left font-bold ${raisedGreen}`}>
              Total
            </button>
          </td>
          <td className="text-right">4</td>
          {COLUMNS.slice(3).map((_, i) => (
            <td key={i} />
          ))}
        </tr>
      </tbody>
    </table>
  );
}

function ScrollBar() {
  return (
    <div className="flex h-4 items-center border-2 border-t-[#2b6a59] border-r-[#a9efd8] border-b-[#a9efd8] border-l-[#2b6a59] bg-[#45ac92]">
      <button type="button" aria-label="Scroll left">
        <svg viewBox="0 0 12 12" className="size-3">
          <path d="M11 1v10L1 6z" fill="#55ceae" stroke="#a9efd8" />
          <path d="M11 11V1L1 6" fill="none" stroke="#2b6a59" />
        </svg>
      </button>
      <div className="flex flex-1">
        <div className="h-3 w-[91%] border-2 border-t-[#a9efd8] border-r-[#2b6a59] border-b-[#2b6a59] border-l-[#a9efd8] bg-[#55ceae]" />
      </div>
      <button type="button" aria-label="Scroll right">
        <svg viewBox="0 0 12 12" className="size-3">
          <path d="M1 1v10l10-5z" fill="#55ceae" stroke="#a9efd8" />
          <path d="M1 11l10-5" stroke="#2b6a59" />
        </svg>
      </button>
    </div>
  );
}

function NavIcon({ label, children }: { label: string; children: ReactNode }) {
  return (
    <Cell className="w-[30px]">
      <button type="button" aria-label={label} className={`flex flex-1 items-center justify-center ${raised}`}>
        <svg viewBox="0 0 18 18" className="size-[18px] shrink-0" fill="none" stroke="#000">
          <path d="M.5.5h17v17H.5z" />
          {children}
        </svg>
      </button>
    </Cell>
  );
}

function DrillToolManager() {
  return (
    <div
      role="dialog"
      aria-label="Drill Tool Manager"
      className={`absolute top-[190px] left-[98px] flex w-[779px] flex-col rounded-t-[7px] rounded-b-[5px] border border-[#c4ced2] bg-[linear-gradient(90deg,transparent_8px,#0a1015_160px),linear-gradient(180deg,#b9c4c4_0,#c4c8c0_140px,#66684e_160px,#6fa0c8_175px,#7c7a5c_200px,#5f83ae_240px,#4b6e9c_100%)] text-[15px] font-bold shadow-[0_2px_14px_4px_rgba(0,0,0,0.6)] ${mono}`}
    >
      <div className={`flex h-7 items-start rounded-t-[6px] bg-[linear-gradient(90deg,#8fa4a8_0,#b4ccd0_40px,#a4acb0_90px,#3c4246_140px,#05070a_180px,#05070a_280px,#0c0e12_500px,#000_560px,#08080a_660px,#33363a_730px,#6a6e72_100%)] pl-[6px] ${ui}`}>
        <div className="flex flex-1 items-center gap-[5px] pt-[5px]">
          <AppGlyph />
          <span className="text-[12px] leading-4 font-normal text-black">Drill Tool Manager</span>
        </div>
        <div className="mr-1 flex h-[19px] w-[104px] divide-x divide-[#c8c8c8] overflow-hidden rounded-b-[5px] border border-t-0 border-[#d0d0d0] bg-[linear-gradient(#8a8c90_0,#6a6c70_45%,#1c1e22_50%,#4a4c50_100%)]">
          <button type="button" aria-label="Minimize dialog" className="flex w-[28px] items-center justify-center">
            <span className="mt-1 h-[5px] w-3 border border-[#445] bg-white" />
          </button>
          <button type="button" aria-label="Maximize dialog" className="flex w-[27px] items-center justify-center">
            <span className="h-[9px] w-[11px] border-2 border-white" />
          </button>
          <button type="button" aria-label="Close dialog" className="flex flex-1 items-center justify-center bg-[linear-gradient(#d08478_0,#c05440_45%,#a01c0c_50%,#d05430_100%)]">
            <CloseGlyph />
          </button>
        </div>
      </div>

      <div className="mx-[5px] mb-[7px] flex flex-col border border-black bg-[#55ceae]">
        <div className="flex h-[33px]">
          <Cell className="w-[168px]">
            <PushButton align="justify-start">Layer          :</PushButton>
          </Cell>
          <Cell className="w-[110px]" bg="bg-[#9cdcdc]">
            <Entry label="Layer name" value="zxdrlt" className={`flex-1 ${sunken}`} />
          </Cell>
          <div className="flex-1" />
          <Cell className="mr-[151px] w-[187px] items-center" bg="bg-[#9cdcdc]">
            <span className="w-[68px] pl-[7px]">Slots:</span>
            <Option label="Slots" value="Yes" className="h-7 flex-1" align="pr-[28px] text-center" />
          </Cell>
        </div>
        <div className="flex h-[29px]">
          <Cell className="w-[308px] items-center" bg="bg-[#9cdcdc]">
            <span className="w-[166px]">Board Thickness :</span>
            <Entry label="Board thickness" value="1570" className={`h-[23px] w-[104px] ${sunken}`} />
            <span className="pl-[3px]">my</span>
          </Cell>
          <Cell className="w-[176px]">
            <PushButton align="justify-start">User Parameters :</PushButton>
          </Cell>
          <Cell className="ml-[3px] w-[127px]" bg="bg-[#9cdcdc]">
            <Entry label="User parameters" value="no_hasl" className={`flex-1 ${sunken}`} />
          </Cell>
        </div>

        <div className="mx-px h-[304px] overflow-hidden border-2 border-t-[#2b6a59] border-r-[#a9efd8] border-b-[#a9efd8] border-l-[#2b6a59] pl-px">
          <ToolTable />
        </div>
        <div className="mx-px mt-1">
          <ScrollBar />
        </div>

        <div className="mt-[5px] flex h-[34px] border-y border-black">
          <div className="flex w-[41px] items-center border border-black bg-[#ffc84a] pl-[3px] text-[12px]">T01</div>
          <Cell className="ml-[2px] w-[59px]">
            <PushButton>First</PushButton>
          </Cell>
          <Cell className="w-[35px]">
            <PushButton>&lt;--</PushButton>
          </Cell>
          <Cell className="w-[35px]">
            <PushButton>--&gt;</PushButton>
          </Cell>
          <Cell className="w-[49px]">
            <PushButton>Last</PushButton>
          </Cell>
          <label htmlFor="tool-index" className="flex w-[61px] items-center pl-[2px]">
            Index:
          </label>
          <div className="relative my-px w-[60px] border-[3px] border-t-[#2b6a59] border-r-[#a9efd8] border-b-[#a9efd8] border-l-[#2b6a59]">
            <Caret />
            <input id="tool-index" className="w-full bg-transparent pl-1 font-bold outline-none" />
          </div>
          <div className="ml-[3px] flex">
            <NavIcon label="Highlight">
              <path d="M9 3q-4 0-4 4 0 2 2 4v4h4v-4q2-2 2-4 0-4-4-4" />
            </NavIcon>
            <NavIcon label="Next tool">
              <path d="M12 3H6q-2 3 1 4l4 3q1 4-3 4H4M13 4l-4 2M4 15l3-2" />
            </NavIcon>
            <NavIcon label="Clear">
              <path d="M9 3q-4 0-4 4 0 2 2 4v4h4v-4q2-2 2-4 0-4-4-4" />
              <path d="M3 2l12 13M15 2L3 15" stroke="#e01818" strokeWidth="2" />
            </NavIcon>
          </div>
          <div className="flex-1" />
          <Cell className="w-[88px] pl-1" bg="bg-[#9cdcdc]">
            <Option label="Units" value="ml/my" className="flex-1" />
          </Cell>
          <Cell className="w-[115px] pl-1" bg="bg-[#9cdcdc]">
            <Option label="Mode" value="Regular" className="flex-1" />
          </Cell>
        </div>

        <div className="mt-1 flex h-[33px] border-t border-black">
          <div className="flex-1 border-r border-black" />
          <Cell className="w-[132px] border-l-0">
            <PushButton>Combine Tools</PushButton>
          </Cell>
          <Cell className="w-[360px] items-stretch" bg="bg-[#9cdcdc]">
            <span className="flex w-[142px] items-center pl-2">Merge Tools :</span>
            <Option label="Merge mode" value="Update Tools Numbers" className="flex-1" />
          </Cell>
          <Cell className="w-[60px]">
            <PushButton>Merge</PushButton>
          </Cell>
        </div>
        <div className="grid h-[29px] grid-cols-4">
          {["Apply", "Calc Drills", "Update Table", "Close"].map((text) => (
            <Cell key={text}>
              <PushButton>{text}</PushButton>
            </Cell>
          ))}
        </div>
      </div>
    </div>
  );
}

const yellowButton = "border-[3px] border-t-[#ffffe8] border-r-[#90907c] border-b-[#90907c] border-l-[#ffffe8] bg-[#ffffcc]";

function CommandBar() {
  return (
    <div className={`flex h-[34px] border-y-2 border-black bg-[#ffffcc] text-[12px] font-bold ${mono}`}>
      {[
        <path key="a" d="M3 5v11h11M4 5l11 10M4 9V5h4M15 11v4h-4" />,
        <path key="b" d="M16 3L3 16h14M5 4v4M12 11l-3 4M10 12h3v3" />,
      ].map((art, i) => (
        <button type="button" key={i} aria-label={i ? "Angle mode" : "Distance mode"} className="flex w-[33px] items-center justify-center border-r border-black">
          <span className="flex size-[27px] items-center justify-center border-2 border-[#c8c8a4]">
            <svg viewBox="0 0 19 19" className="size-[19px]" fill="none" stroke="#000">
              <path d="M.5.5h18v18H.5z" />
              {art}
            </svg>
          </span>
        </button>
      ))}
      <button type="button" aria-label="Snap grid" className="flex w-[29px] items-center justify-center bg-[#55ceae]">
        <span className={`flex h-[26px] w-6 items-center justify-center ${yellowButton}`}>
          <svg viewBox="0 0 17 17" className="size-[17px] shrink-0" fill="none" stroke="#000">
            <path d="M.5.5h16v16H.5zM3 14.500V7l4-4h7v11.500zM8.500 3v12M3 9.500h12" />
          </svg>
        </span>
      </button>
      <label htmlFor="xy" className="flex w-12 items-center pl-[2px] whitespace-pre">
        X Y :
      </label>
      <div className="flex w-[173px] border-x border-black p-[2px]">
        <div className={`relative flex-1 ${sunkenGrey}`}>
          <Caret />
          <input id="xy" className="w-full bg-transparent pl-1 outline-none" />
        </div>
      </div>
      <button type="button" aria-label="Help message" className="flex w-8 items-center justify-center border-r border-black bg-[#55ceae]">
        <span className={`flex size-[26px] items-center justify-center ${yellowButton}`}>
          <svg viewBox="0 0 17 17" className="size-[17px] shrink-0" fill="none" stroke="#000">
            <path d="M.5.5h16v16H.5z" />
            <path d="M8.500 3v7M8.500 12v2" strokeWidth="2" />
          </svg>
        </span>
      </button>
      <p className="flex flex-1 items-center pl-1">&lt;M1&gt; - Select first corner</p>
      <div className="flex w-[80px] border-l-2 border-black bg-[#55ceae] py-px pr-[3px] pl-[5px] text-[15px]">
        <Option label="Display units" value="MM" box={raisedGreen} className="flex-1" />
      </div>
    </div>
  );
}

const TASKS: { name: string; art: ReactNode; stacked?: boolean; active?: boolean }[] = [
  {
    name: "Shell",
    art: (
      <>
        <path d="M10 30l3-3Q2 24 1 16 1 9 7 7q4-6 9-5 6-1 9 4 7 3 6 11-2 7-12 10l3 3z" fill="#ffe0a0" stroke="#e0a040" />
        <path d="M15 27L4 13M15 27L9 6M16 27l0-24M17 27l6-21M18 27l11-14" stroke="#f0b058" strokeWidth="1.500" />
        <path d="M20 11l2 6 7 1-5 4 3 7-7-4-6 3 2-6-4-5h6z" fill="#f49030" stroke="#c06010" />
      </>
    ),
  },
  {
    name: "Notes",
    art: (
      <>
        <path d="M4 3h24v27H4z" fill="#f4fcff" stroke="#6cb8dc" />
        <path d="M6 5h20M7 10h18M7 14h18M7 18h18M7 22h18M7 26h18" stroke="#3c9cc8" strokeWidth="2" />
      </>
    ),
  },
  {
    name: "Disk",
    art: (
      <>
        <path d="M2 1h27l2 2v28H2z" fill="#2a50d4" />
        <path d="M9 1h14v11H9z" fill="#d4d8e4" />
        <path d="M18 3h3v7h-3z" fill="#2a3c80" />
        <path d="M5 15h23v16H5z" fill="#fff" />
        <path d="M8 19h17M8 23h9M8 27h8" stroke="#d04848" strokeWidth="2" />
        <text x="18" y="29" fontSize="8" fontWeight="bold">
          64
        </text>
      </>
    ),
  },
  {
    name: "Panel",
    art: (
      <>
        <path d="M3 29V3h22" fill="none" stroke="#107a3c" strokeWidth="2" />
        <path d="M10 31V8h12q9 1 9 9-1 7-10 8h-4v6z" fill="#1a9a50" />
        <path d="M6 9h4M6 13h4M6 17h4M6 21h4M6 25h4" stroke="#0c5c2c" />
      </>
    ),
  },
  {
    name: "Gerber",
    art: (
      <path
        d="M28 1q0 7-5 8h-8q-6 5-5 13l2 3h6l2-4h-4l1-5h12l-3 12-4 3H7q-6-4-4-14Q5 7 12 4h11z"
        fill="#e0281c"
        stroke="#8c1410"
      />
    ),
  },
  {
    name: "Wing",
    art: (
      <>
        <rect x="1" y="2" width="30" height="30" rx="6" fill="#1a8cff" />
        <path d="M9 8q12 4 14 10l-4 1q2 2-1 3-1 3-5 5 3-5 0-8-4-3-4-11z" fill="#fff" />
      </>
    ),
  },
  {
    name: "Excel",
    stacked: true,
    art: (
      <>
        <path d="M2 4l21-3 7 6v23L2 31z" fill="#e4f0dc" stroke="#4c9c38" strokeWidth="2" />
        <path d="M15 14h15v15H15zM15 19h15M15 24h15M22.500 14v15" fill="#fff" stroke="#4c9c38" strokeWidth="1.500" />
        <path d="M7 9l11 14M18 9L7 23" stroke="#2c7c1c" strokeWidth="4" />
      </>
    ),
  },
  {
    name: "Word",
    stacked: true,
    art: (
      <>
        <path d="M2 3l21-2 7 6v23L2 30z" fill="#e4ecf8" stroke="#2c58a8" strokeWidth="2" />
        <path d="M20 13h8M20 17h8M20 21h8M12 26h16" stroke="#4878c0" />
        <path d="M6 9l3 12 4-9 4 9 4-12" fill="none" stroke="#1c4898" strokeWidth="3" />
      </>
    ),
  },
  {
    name: "Viewer",
    art: (
      <>
        <ellipse cx="19" cy="20" rx="12" ry="10" fill="#128c8c" stroke="#5cd4cc" />
        <ellipse cx="20" cy="19" rx="7" ry="6" fill="#186c6c" stroke="#c8e870" strokeWidth="1.500" />
        <circle cx="20" cy="18" r="2.500" fill="#f8e060" />
        <path d="M1 8l8-6 5 5-9 4zM2 16l5 9 5 3" fill="#58d0c4" stroke="#108080" />
      </>
    ),
  },
  {
    name: "X server",
    stacked: true,
    active: true,
    art: (
      <>
        <path d="M27 3L3 30" stroke="#300838" strokeWidth="2" />
        <path d="M3 3h6l20 27h-7z" fill="#78107c" stroke="#30083c" />
      </>
    ),
  },
];

function Taskbar() {
  return (
    <footer className={`flex h-10 items-stretch bg-[linear-gradient(#3a5c88_0,#1d3f70_3px,#143260_60%,#10284e_100%)] text-white ${ui}`}>
      <button type="button" aria-label="Start" className="flex w-[54px] items-center justify-center">
        <svg viewBox="0 0 38 38" className="size-[38px]">
          <defs>
            <radialGradient id="orb" cx=".5" cy=".85" r=".8">
              <stop offset="0" stopColor="#4cd0f8" />
              <stop offset=".5" stopColor="#1c5c9c" />
              <stop offset="1" stopColor="#8cb0cc" />
            </radialGradient>
          </defs>
          <circle cx="19" cy="19" r="18" fill="url(#orb)" stroke="#0c2c54" />
          <path d="M10 11q4-3 8 0l-2 7q-4-3-8 0z" fill="#f06030" />
          <path d="M20 12q4 3 8 0l-2 7q-4 3-8 0z" fill="#8cd048" />
          <path d="M8 20q4-3 8 0l-2 7q-4-3-8 0z" fill="#58a8f0" />
          <path d="M18 21q4 3 8 0l-2 7q-4 3-8 0z" fill="#fccc40" />
        </svg>
      </button>
      <div className="flex flex-1 gap-[3px] pl-[5px]">
        {TASKS.map((task) => (
          <button
            type="button"
            key={task.name}
            aria-label={task.name}
            className={`my-px flex w-[59px] items-center justify-center rounded-[3px] border border-[#8c9cb8] ${task.stacked ? "border-r-4 border-double" : ""} ${
              task.active ? "bg-[linear-gradient(135deg,#a8b0c4_0,#c8ccd8_60%,#b0b6c8_100%)]" : "bg-[linear-gradient(135deg,#8093b4_0,#5c749c_45%,#2c4a78_50%,#385684_100%)]"
            }`}
          >
            <svg viewBox="0 0 32 32" className="size-8 shrink-0">
              {task.art}
            </svg>
          </button>
        ))}
      </div>
      <div className="flex items-center pr-2">
        <svg viewBox="0 0 16 14" className="h-[14px] w-4">
          <path d="M8 4q0-2 3-2h3" fill="none" stroke="#bbb" />
          <path d="M0 5h16v9H0z" fill="#d8d4cc" />
          <path d="M2 7.500h12M2 9.500h12M4 11.500h8" stroke="#555" strokeDasharray="1 1" />
        </svg>
        <svg viewBox="0 0 16 16" className="ml-[6px] size-4">
          <circle cx="8" cy="8" r="7.500" fill="#2838b8" stroke="#b0b8e8" />
          <text x="8" y="12" textAnchor="middle" fontSize="11" fontWeight="bold" fill="#fff">
            ?
          </text>
        </svg>
        <svg viewBox="0 0 10 18" className="ml-2 h-[18px] w-[10px]" fill="none" stroke="#fff">
          <path d="M3.500 1.500h5v3h-5zM1.500 3.500h5v3h-5z" />
          <path d="M2 14h6l-3 3z" fill="#fff" stroke="none" />
        </svg>
        <svg viewBox="0 0 8 5" className="ml-[10px] h-[5px] w-2">
          <path d="M0 5h8L4 0z" fill="#fff" />
        </svg>
        <svg viewBox="0 0 16 16" className="ml-[14px] size-4">
          <path d="M1.500 1v14M2 2h7l1 2h4v5H2z" fill="#fff" stroke="#fff" />
          <circle cx="11" cy="11" r="5" fill="#d82818" />
          <path d="M9 9l4 4M13 9l-4 4" stroke="#fff" strokeWidth="1.500" />
        </svg>
        <svg viewBox="0 0 16 16" className="ml-2 size-4" fill="none" stroke="#fff">
          <path d="M1 5.500h3l4-4v13l-4-4H1z" fill="#fff" />
          <path d="M10 5q2 3 0 6M12.500 3q3 5 0 10" />
        </svg>
        <svg viewBox="0 0 16 16" className="ml-2 size-4" fill="none" stroke="#fff">
          <path d="M5.500 4.500h10v8h-10zM7 15.500h7M10.500 12v3M1.500 1v4h3V1M3 5v7h2" />
        </svg>
        <div className="ml-[14px] flex w-[62px] flex-col items-center text-[12px] leading-[18px]">
          <span>14:31</span>
          <span>2022/9/20</span>
        </div>
      </div>
      <button type="button" aria-label="Show desktop" className="w-[14px] border border-[#6c84a8] bg-[linear-gradient(#4c6890,#1c3860)]" />
    </footer>
  );
}

export default function App() {
  return (
    <div className="relative flex min-h-screen flex-col bg-black text-black">
      <TitleBar />
      <Header />
      <main className="flex flex-1">
        <LayerPanel />
        <BoardCanvas />
        <ToolPanel />
      </main>
      <CommandBar />
      <div className="h-8 bg-[#c4fffc] p-px pt-[3px]">
        <div className="h-full border border-black bg-[#b4ffff] p-px">
          <div className="h-full border-r-2 border-b-2 border-[#5c9c98]" />
        </div>
      </div>
      <Taskbar />
      <DrillToolManager />
    </div>
  );
}
